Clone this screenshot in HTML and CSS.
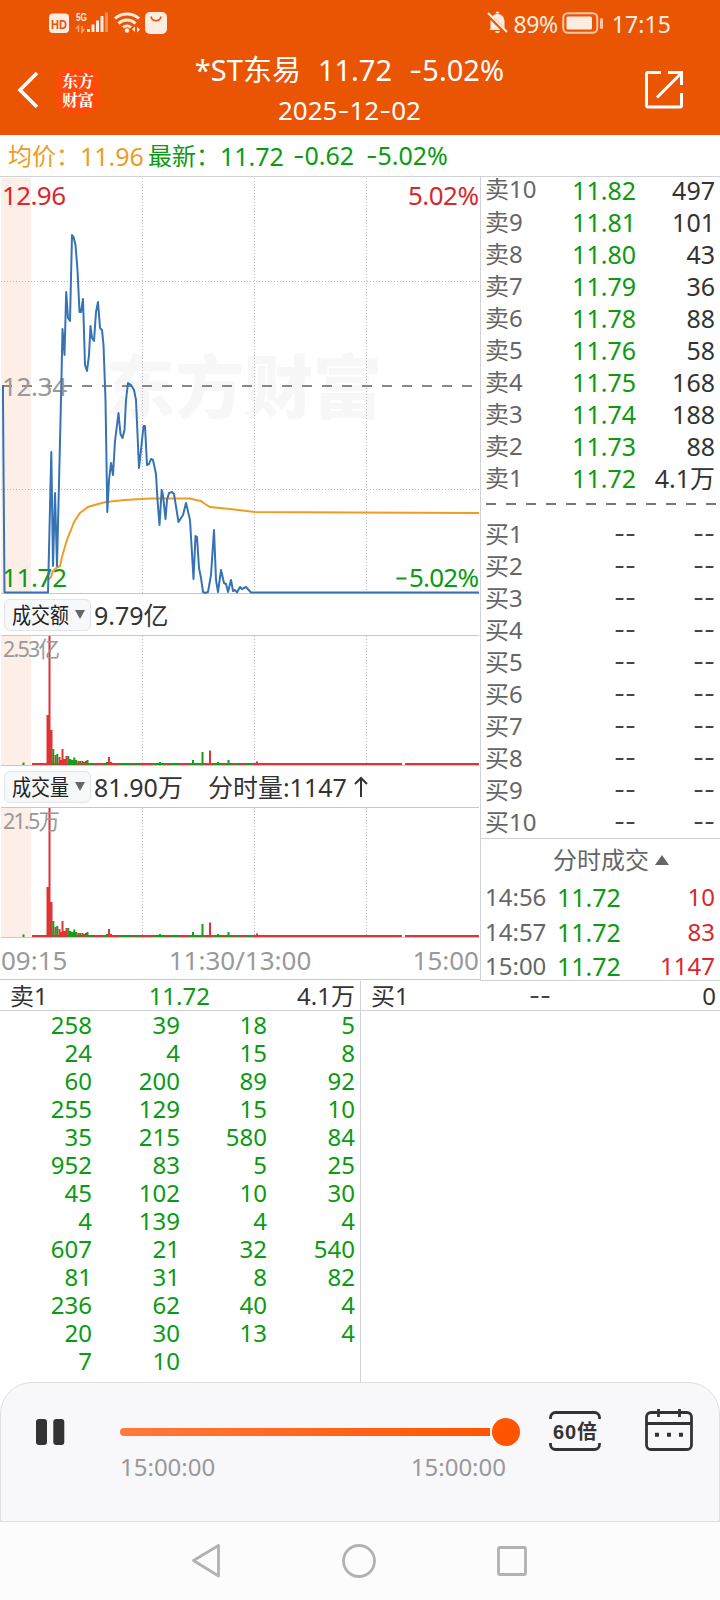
FILE: index.html
```html
<!DOCTYPE html>
<html lang="zh-CN">
<head>
<meta charset="utf-8">
<title>*ST东易</title>
<link rel="stylesheet" href="styles.css">
</head>
<body>
<header class="header">
  <div class="status">
    <svg class="status-left" width="130" height="24" viewBox="0 0 130 24">
      <rect x="1" y="1.500" width="20" height="19.500" rx="4" fill="#fdece2"/>
      <text x="3" y="16.500" class="hd" textLength="16" lengthAdjust="spacingAndGlyphs">HD</text>
      <text x="28" y="8.500" class="fiveg" textLength="11" lengthAdjust="spacingAndGlyphs">5G</text>
      <path d="M30.500 20v-6l-2.500 2.500M34 14v6l2.500-3" fill="none" stroke="#f5a780" stroke-width="1.500"/>
      <path d="M40.500 20v-3M45 20v-7.500M49.500 20v-11.500M54 20v-16" stroke="#fdece2" stroke-width="3"/>
      <path d="M58.500 20V.5" stroke="#f08c58" stroke-width="3"/>
      <path d="M67 6.500a18 18 0 0 1 24 0M70.500 11.500a12 12 0 0 1 17 0M75 15.500a6 6 0 0 1 8 0" fill="none" stroke="#fdece2" stroke-width="3"/>
      <circle cx="79" cy="18.500" r="2.200" fill="#fdece2"/>
      <path d="M84 17l3-2.500v5.500zM92 17.500l-3-2.500v5.500z" fill="#fdece2"/>
      <rect x="97" y="0" width="22" height="22" rx="5" fill="#fdece2"/>
      <path d="M103 4.500c1 5.500 9 5.500 10 0" fill="none" stroke="#ea5504" stroke-width="1.500"/>
    </svg>
    <div class="status-right">
      <svg width="21" height="22" viewBox="0 0 21 22">
        <path d="M3.500 16.500V9a7 7 0 0 1 14 0v7.500l1.500 1.500H2zM8 19h5a2.500 2 0 0 1-5 0z" fill="#fdece2"/>
        <path d="M8.500 1.500a2 2 0 0 1 4 0z" fill="#fdece2"/>
        <path d="M0 1.500L19 20.500" stroke="#ea5504" stroke-width="4"/>
        <path d="M1 1L20 20" stroke="#fdece2" stroke-width="2"/>
      </svg>
      <span class="battery-text">89%</span>
      <svg width="42" height="22" viewBox="0 0 42 22">
        <rect x="1.250" y="1.250" width="34" height="19.500" rx="4.500" fill="none" stroke="#fbc5a8" stroke-width="2"/>
        <rect x="4.500" y="4.500" width="25.500" height="13" rx="1.500" fill="#fdece2"/>
        <rect x="38" y="6" width="3" height="11" rx="1.500" fill="#fbc5a8"/>
      </svg>
      <span class="clock">17:15</span>
    </div>
  </div>
  <div class="titlebar">
    <div class="brand">
      <svg width="22" height="38" viewBox="0 0 22 38"><path d="M20 2L3 19l17 17" fill="none" stroke="#fff" stroke-width="3.600"/></svg>
      <div class="logo"><span>东方</span><span>财富</span></div>
    </div>
    <div class="title">
      <div class="title-main"><span>*ST东易</span><span>11.72</span><span><i class="dash">-</i>5.02%</span></div>
      <div class="title-date">2025<i class="dash">-</i>12<i class="dash">-</i>02</div>
    </div>
    <svg class="share" width="40" height="40" viewBox="0 0 40 40">
      <path d="M17 2.500H4a1.500 1.500 0 0 0-1.500 1.500v31.500a1.500 1.500 0 0 0 1.500 1.500h32a1.500 1.500 0 0 0 1.500-1.500V23M24 2.500h13.500V15M13 27.500L36 4.500" fill="none" stroke="#fff" stroke-width="3"/>
    </svg>
  </div>
</header>

<div class="quote">
  <span class="q-avg-label">均价：</span><span class="q-avg">11.96</span>
  <span class="q-new-label">最新：</span><span class="q-new">11.72</span>
  <span class="q-diff"><i class="dash">-</i>0.62</span>
  <span><i class="dash">-</i>5.02%</span>
</div>

<main class="market">
  <section class="charts">
    <svg class="price-chart" width="480" height="417" viewBox="0 177 480 417">
      <rect x="1" y="178" width="30" height="415" fill="#fdeee8"/>
      <text x="106" y="413" class="watermark" textLength="276">东方财富</text>
      <path class="dots" d="M142.500 178V593M254.500 178V593M366.500 178V593M1 281.500H479M1 489.500H479"/>
      <path d="M2 386H479" stroke="#888" stroke-width="2" stroke-dasharray="10 10"/>
      <path d="M1 593.500H479" stroke="#c8c8c8"/>
      <text x="2" y="205" class="axis up" textLength="64">12.96</text>
      <text x="479" y="205" class="axis up end" textLength="71">5.02%</text>
      <text x="2" y="396" class="axis muted" textLength="65">12.34</text>
      <text x="2" y="586.500" class="axis down" textLength="65">11.72</text>
      <text x="479" y="586.500" class="axis down end" textLength="70">5.02%</text>
      <path d="M396.500 578.500h10" stroke="#0b9a12" stroke-width="2"/>
      <polyline fill="none" stroke="#ec9d26" stroke-width="2" points="48,580 51,577 53,571 56,568 60,566 62,557 64,550 66,543 68,537 71,530 74,522 80,513 88,507 98,504 106,502 125,500 150,498.500 190,498.500 196,500 201,501 205,504 210,507 230,509 255,512 350,512.500 479,513"/>
      <polyline fill="none" stroke="#3673b5" stroke-width="2" stroke-linejoin="round" points="3,385 3,400 4.500,592.500 48,592.500 51.300,452 53,566 55,493 57,566 61,400 62.500,329 64.500,355 66.200,292 68,318 70,321 72,235 73.500,237 75.500,245 77.500,270 79.500,312 81,312 83,299 85,365 87,371 89,355 90.500,326 92,338 94,341 96,312 98,302 100,328 102,330 103.500,345 105.500,400 107.300,512 109,480 111,463 113,475 115,441 118.500,413 120.500,434 122.500,438 124.500,430 126,400 128,383 131,385 134,390 136,400 139,468 141,450 143.500,426 145,426 147,465 149,464 151,459 153,460 156,474 157.500,500 159.500,525 161.700,490 163,495 165.500,519 167,500 169,493 172,492 174,494 178.500,522 183,515 186,503 190,520 193.500,579 195.500,536 197,537 199,568 201,578 203,592 205,593 208,592 211,575 214,530 216,580 218,592 221,570 224,583 226,584 228,592 231,580 233,591 235,590 237,592.500 240,587 242,589 246,587 251,592.500 479,592.500"/>
    </svg>

    <div class="indicator">
      <button class="picker"><svg width="57" height="28"><text x="0" y="22" textLength="57" lengthAdjust="spacingAndGlyphs" class="picker-text">成交额</text></svg><i class="caret"></i></button>
      <span>9.79亿</span>
    </div>
    <svg class="volume-chart" width="480" height="131" viewBox="0 0 480 131">
      <defs>
        <g id="bars">
          <rect x="1" y="1" width="30" height="129" fill="#fdeee8"/>
          <path class="dots" d="M142.500 1V130M254.500 1V130M366.500 1V130"/>
          <path d="M1 .5H479M1 130.500H479" stroke="#c8c8c8"/>
          <path d="M32 129H402M405 129H479" stroke="#d8383c" stroke-width="2"/>
          <path d="M90 129h4M104 129h4M120 129h12M134 129h6M154 129h12M170 129h9M190 129h14M214 129h8M226 129h6M236 129h4M246 129h5" stroke="#1e971c" stroke-width="2"/>
          <path d="M47.500 130V80M49.500 130V1M51.500 130V95M55.500 130V120M59.500 130V122M60.500 130V125M62.500 130V114M64.500 130V124M66.500 130V121M78.500 130V126M82.500 130V126M84.500 130V127M109 130V122M111 130V127M210 130V115.500M257 130V126.500" stroke="#df3336" stroke-width="2"/>
          <path d="M23.500 130v-2.500M53.300 130V114M57.300 130V119M68.300 130V121M70.300 130V124M72.300 130V125M74.300 130V122.500M76.300 130V125M80.300 130V126M86 130V126M87.500 130V125M107 130V127M160 130V127M193 130V125M202.500 130V117M218 130V127M228.500 130V125" stroke="#1e971c" stroke-width="2"/>
        </g>
      </defs>
      <use href="#bars"/>
      <text x="3" y="22" class="peak" textLength="57">2.53亿</text>
    </svg>

    <div class="indicator">
      <button class="picker"><svg width="57" height="28"><text x="0" y="22" textLength="57" lengthAdjust="spacingAndGlyphs" class="picker-text">成交量</text></svg><i class="caret"></i></button>
      <span>81.90万</span>
      <span class="minute-volume">分时量:1147<svg width="16" height="22" viewBox="0 0 16 22"><path d="M8 21V2M2 8l6-6 6 6" fill="none" stroke="#333" stroke-width="2"/></svg></span>
    </div>
    <svg class="volume-chart" width="480" height="131" viewBox="0 0 480 131">
      <use href="#bars"/>
      <text x="3" y="22" class="peak" textLength="57">21.5万</text>
    </svg>
    <div class="times"><span>09:15</span><span>11:30/13:00</span><span>15:00</span></div>
  </section>

  <section class="book">
    <div class="asks">
      <div class="level first"><b>卖10</b><span>11.82</span><em>497</em></div>
      <div class="level"><b>卖9</b><span>11.81</span><em>101</em></div>
      <div class="level"><b>卖8</b><span>11.80</span><em>43</em></div>
      <div class="level"><b>卖7</b><span>11.79</span><em>36</em></div>
      <div class="level"><b>卖6</b><span>11.78</span><em>88</em></div>
      <div class="level"><b>卖5</b><span>11.76</span><em>58</em></div>
      <div class="level"><b>卖4</b><span>11.75</span><em>168</em></div>
      <div class="level"><b>卖3</b><span>11.74</span><em>188</em></div>
      <div class="level"><b>卖2</b><span>11.73</span><em>88</em></div>
      <div class="level"><b>卖1</b><span>11.72</span><em>4.1万</em></div>
    </div>
    <div class="split"></div>
    <div class="bids">
      <div class="level"><b>买1</b><span class="dash">--</span><em class="dash">--</em></div>
      <div class="level"><b>买2</b><span class="dash">--</span><em class="dash">--</em></div>
      <div class="level"><b>买3</b><span class="dash">--</span><em class="dash">--</em></div>
      <div class="level"><b>买4</b><span class="dash">--</span><em class="dash">--</em></div>
      <div class="level"><b>买5</b><span class="dash">--</span><em class="dash">--</em></div>
      <div class="level"><b>买6</b><span class="dash">--</span><em class="dash">--</em></div>
      <div class="level"><b>买7</b><span class="dash">--</span><em class="dash">--</em></div>
      <div class="level"><b>买8</b><span class="dash">--</span><em class="dash">--</em></div>
      <div class="level"><b>买9</b><span class="dash">--</span><em class="dash">--</em></div>
      <div class="level"><b>买10</b><span class="dash">--</span><em class="dash">--</em></div>
    </div>
    <div class="trades">
      <div class="trades-title">分时成交<i></i></div>
      <div class="trade"><b>14:56</b><span>11.72</span><em>10</em></div>
      <div class="trade"><b>14:57</b><span>11.72</span><em>83</em></div>
      <div class="trade"><b>15:00</b><span>11.72</span><em>1147</em></div>
    </div>
  </section>
</main>

<section class="queues">
  <div class="queue">
    <div class="queue-head"><b>卖1</b><span>11.72</span><em>4.1万</em></div>
    <div class="orders">
      <span>258</span><span>39</span><span>18</span><span>5</span>
      <span>24</span><span>4</span><span>15</span><span>8</span>
      <span>60</span><span>200</span><span>89</span><span>92</span>
      <span>255</span><span>129</span><span>15</span><span>10</span>
      <span>35</span><span>215</span><span>580</span><span>84</span>
      <span>952</span><span>83</span><span>5</span><span>25</span>
      <span>45</span><span>102</span><span>10</span><span>30</span>
      <span>4</span><span>139</span><span>4</span><span>4</span>
      <span>607</span><span>21</span><span>32</span><span>540</span>
      <span>81</span><span>31</span><span>8</span><span>82</span>
      <span>236</span><span>62</span><span>40</span><span>4</span>
      <span>20</span><span>30</span><span>13</span><span>4</span>
      <span>7</span><span>10</span>
    </div>
  </div>
  <div class="queue right">
    <div class="queue-head"><b>买1</b><span class="dash">--</span><em>0</em></div>
  </div>
</section>

<footer class="player">
  <svg class="pause" width="28" height="26" viewBox="0 0 28 26"><rect width="11" height="26" rx="3" fill="#333"/><rect x="17.300" width="11" height="26" rx="3" fill="#333"/></svg>
  <div class="timeline">
    <div class="track"><div class="bar"></div><div class="knob"></div></div>
    <div class="track-times"><span>15:00:00</span><span>15:00:00</span></div>
  </div>
  <div class="speed">
    <svg width="52" height="40" viewBox="0 0 52 40"><path d="M1.500 8V6.500a5 5 0 0 1 5-5h39a5 5 0 0 1 5 5V8M1.500 32v1.500a5 5 0 0 0 5 5h39a5 5 0 0 0 5-5V32" fill="none" stroke="#333" stroke-width="2.800"/><text x="4" y="27.500" class="speed-text" textLength="44">60倍</text></svg>
  </div>
  <svg class="calendar" width="48" height="42" viewBox="0 0 48 42"><rect x="1.500" y="3.500" width="45" height="37" rx="4.500" fill="none" stroke="#333" stroke-width="2.800"/><path d="M1.500 14.500h45M13.500 0v8M34.500 0v8" stroke="#333" stroke-width="2.800"/><path d="M10 25.800h4M22 25.800h4M34 25.800h4" stroke="#333" stroke-width="4"/></svg>
</footer>

<nav class="system-nav">
  <svg width="30" height="34" viewBox="0 0 30 34"><path d="M27.500 1.500L2.500 16.500l25 15.500z" fill="none" stroke="#b2b2b2" stroke-width="2.800" stroke-linejoin="round"/></svg>
  <svg width="34" height="34" viewBox="0 0 34 34"><circle cx="17" cy="17" r="15.500" fill="none" stroke="#b2b2b2" stroke-width="2.800"/></svg>
  <svg width="30" height="30" viewBox="0 0 30 30"><rect x="1.500" y="1.500" width="27" height="27" rx="1.500" fill="none" stroke="#b2b2b2" stroke-width="2.800"/></svg>
</nav>
</body>
</html>
```
FILE: styles.css
```css
* { box-sizing: border-box; }
body {
  margin: 0;
  width: 720px;
  height: 1600px;
  overflow: hidden;
  background: #fff;
  color: #333;
  font-family: "Noto Sans", "Noto Sans CJK SC", sans-serif;
  font-size: 24px;
  line-height: 32px;
  white-space: nowrap;
}
svg { display: block; flex: none; overflow: visible; }
b, em, i { font-weight: normal; font-style: normal; }
.dash { font-family: Inter, sans-serif; }

/* Header */
.header { height: 135px; background: #ea5504; color: #fff; }
.status { height: 46px; display: flex; justify-content: space-between; padding: 12px 49px 0 48px; color: #fdece2; }
.status-right { display: flex; align-items: center; height: 22px; }
.battery-text { font-size: 23px; margin: 1px 4px 0 5px; letter-spacing: -.4px; }
.clock { font-size: 23px; margin: 1px 0 0 8px; letter-spacing: .1px; }
.hd { font: bold 13px "Liberation Sans", sans-serif; fill: #ea5504; }
.fiveg { font: bold 11px "Liberation Sans", sans-serif; fill: #fdece2; }
.titlebar { display: flex; justify-content: space-between; height: 89px; padding: 0 36px 0 17px; }
.brand { display: flex; gap: 17px; padding-top: 22px; width: 180px; }
.brand > svg { margin-top: 3px; }
.logo { width: 44px; height: 45px; border-radius: 12px; background: #ff4a0a; display: flex; flex-direction: column; align-items: center; padding-top: 4px; font: 700 16px/18.5px "Noto Serif CJK SC", "Noto Sans CJK SC", sans-serif; }
.title { padding-top: 5px; text-align: center; }
.title-main { display: flex; font-size: 29px; line-height: 38px; gap: 17px; }
.title-date { font-size: 26px; line-height: 40px; }
.share { margin: 24px 0 0 140px; }

/* Quote line */
.quote { height: 42px; display: flex; align-items: center; padding: 0 0 0 8px; border-bottom: 1px solid #d0d3d6; font-size: 25px; color: #0b9a12; }
.q-avg-label, .q-avg { color: #ec9d26; }
.q-avg-label, .q-new-label { width: 72px; font-size: 24px; }
.q-avg { width: 68px; }
.q-new { width: 73px; }
.q-diff { width: 73px; }

/* Charts */
.market { display: flex; height: 804px; }
.charts { width: 481px; border-right: 1px solid #d0d3d6; }
.dots { stroke: #bbb; stroke-dasharray: 1 2; fill: none; }
.watermark { font: 900 69px "Noto Sans CJK SC", sans-serif; fill: #f7f7f7; }
.axis { font-size: 26px; }
.up { fill: #d8282d; }
.down { fill: #0b9a12; }
.muted, .peak { fill: #999; }
.end { text-anchor: end; }
.peak { font-size: 21.500px; }
.indicator { height: 41px; display: flex; align-items: center; padding-left: 4px; font-size: 25px; }
.picker { width: 87px; height: 32px; display: flex; align-items: center; gap: 6px; padding: 0 0 0 7px; margin-right: 3px; border: 1px solid #e2e4e8; border-radius: 6px; background: #f7f8fa; }
.picker-text { font: 22px "Noto Sans CJK SC", sans-serif; fill: #222; }
.caret { border: 5px solid transparent; border-top: 9px solid #666; border-bottom: 0; }
.minute-volume { display: flex; align-items: center; gap: 6px; margin-left: 25px; }
.times { height: 42px; display: flex; justify-content: space-between; align-items: center; padding: 2px 1px 0 1px; border-bottom: 1px solid #c8c8c8; color: #999; font-size: 26px; }

/* Order book */
.book { flex: 1; }
.asks { padding-top: 0; height: 326px; }
.level, .trade { display: grid; grid-template-columns: 60px 91px 79px; height: 32px; line-height: 32px; padding-left: 4px; }
.level b { color: #666; }
.level span, .level em, .trade em { text-align: right; }
.level span { color: #0b9a12; }
.asks .level { position: relative; top: -3px; }
.level span:not(.dash), .level em:not(.dash) { font-size: 25px; }
.level .dash { color: #444; }
.first b { line-height: 29px; }
.split { height: 2px; margin: 0 0 0 5px; background: repeating-linear-gradient(90deg, #777 0 10px, transparent 10px 20px); }
.bids { padding-top: 13px; height: 333px; }
.trades { border-top: 1px solid #d0d3d6; height: 143px; border-bottom: 1px solid #d0d3d6; }
.trades-title { display: flex; align-items: center; gap: 6px; height: 41px; padding-left: 72px; color: #666; }
.trades-title i { border: 7px solid transparent; border-bottom: 10px solid #666; border-top: 0; }
.trade { grid-template-columns: 72px 79px 79px; height: 34.500px; line-height: 34px; }
.trade b { color: #666; }
.trade span { color: #0b9a12; font-size: 25px; }
.trade em { color: #d8282d; }

/* Order queues */
.queues { display: grid; grid-template-columns: 361px 359px; height: 401px; }
.queue:first-child { border-right: 1px solid #d0d3d6; }
.queue-head { display: grid; grid-template-columns: 100px 100px 145px; height: 30px; line-height: 30px; padding-left: 10px; border-bottom: 1px solid #d0d3d6; }
.queue-head > * { text-align: right; }
.queue-head b { text-align: left; }
.queue-head span { color: #0b9a12; }
.queue-head .dash { color: #444; }
.right .queue-head { grid-template-columns: 80px 100px 165px; }
.orders { display: grid; grid-template-columns: 92px 88px 87px 88px; grid-auto-rows: 28px; line-height: 28px; text-align: right; color: #0b9a12; }

/* Playback controls */
.player { height: 140px; display: flex; align-items: flex-start; border: 1px solid #dfdfdf; border-radius: 32px 32px 0 0; background: #f8f8fa; padding-left: 35px; }
.pause { margin-top: 36px; }
.timeline { width: 400px; margin-left: 56px; padding-top: 34px; }
.track { display: flex; align-items: center; gap: 2px; height: 30px; }
.bar { width: 370px; height: 8px; border-radius: 4px 0 0 4px; background: linear-gradient(90deg, #ff7a3c, #ff5500); }
.knob { width: 28px; height: 28px; border-radius: 50%; background: #ff5500; }
.track-times { display: flex; justify-content: space-between; width: 386px; padding-top: 4px; color: #999; }
.speed { margin: 28px 0 0 29px; }
.speed-text { font: bold 20px "Liberation Sans", "Noto Sans CJK SC", sans-serif; fill: #333; }
.calendar { margin: 26px 0 0 44px; }
.system-nav { height: 78px; display: flex; align-items: center; gap: 121px; padding-left: 191px; background: #fcfcfc; }
```
